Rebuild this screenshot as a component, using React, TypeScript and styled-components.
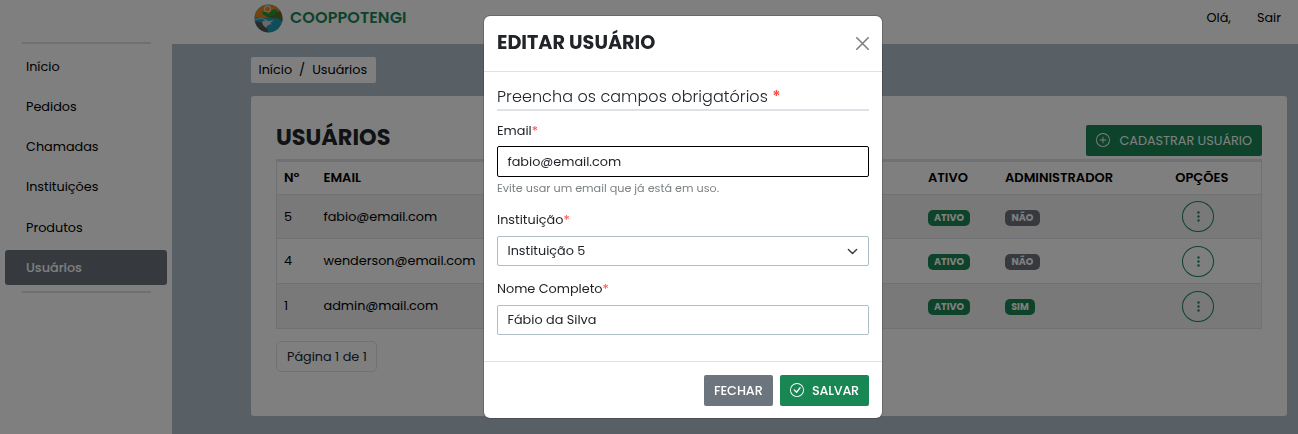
import React from "react";
import styled, { createGlobalStyle, css } from "styled-components";
import { BsPlusCircle, BsCheckCircle, BsThreeDotsVertical } from "react-icons/bs";

const GlobalStyle = createGlobalStyle`
  *, *::before, *::after { box-sizing: border-box; }
  body {
    margin: 0;
    overflow: hidden;
    font-family: Poppins, Inter, "Open Sans", sans-serif;
    font-size: 12.8px;
    line-height: 20px;
    color: #212529;
    background: #b1bfcb;
  }
  button, input { font: inherit; letter-spacing: inherit; }
`;

/* Text run with its own tracking */
const T = styled.span<{ $ls?: number }>`
  letter-spacing: ${(p) => p.$ls ?? 0}px;
  white-space: nowrap;
`;

const Page = styled.div`
  display: grid;
  grid-template-columns: 172px 1fr;
  height: 434px;
`;
const Sidebar = styled.aside`
  background: #fff;
  padding: 42px 5px 0;
`;
const Rule = styled.hr`
  border: 0;
  height: 2px;
  margin: 0 16px 0 17px;
  background: #dee0e2;
`;
const Nav = styled.nav`
  display: flex;
  flex-direction: column;
  gap: 5.3px;
  padding: 5px 0 6px;
`;
const NavItem = styled.a<{ $active?: boolean }>`
  display: flex;
  align-items: center;
  height: 35px;
  padding-left: 21px;
  border-radius: 3px;
  color: #000;
  ${(p) => p.$active && css`background: #6c757d; color: #fff; font-weight: 500;`}
`;
const Main = styled.div`
  display: flex;
  flex-direction: column;
`;
const Header = styled.header`
  display: flex;
  align-items: center;
  height: 44px;
  padding: 0 17px 8px 82px;
  background: #fff;
  color: #000;
`;
const Brand = styled.div`
  flex: 1;
  display: flex;
  align-items: center;
  gap: 7px;
  font-size: 16px;
  font-weight: 600;
  color: #198754;
`;
const UserLinks = styled.div`
  display: flex;
  gap: 26px;
`;
const Content = styled.div`
  padding: 13px 11px 0 79px;
`;
const Crumbs = styled.div`
  display: inline-flex;
  align-items: center;
  gap: 7px;
  width: 125px;
  height: 26px;
  padding: 0 7.5px 1px;
  border-radius: 2px;
  background: #fff;
  color: #000;
  vertical-align: top;
`;
const Card = styled.section`
  height: 320px;
  margin-top: 13px;
  padding: 29px 25px 0;
  border-radius: 3px;
  background: #fff;
`;
const CardHead = styled.div`
  display: flex;
  justify-content: space-between;
  height: 34px;
`;
const CardTitle = styled.h1`
  margin: 0;
  padding-top: 1px;
  font-size: 22.4px;
  line-height: 22px;
  font-weight: 700;
`;
const Button = styled.button<{ $tone?: "gray"; $w: number; $weight?: number }>`
  display: flex;
  align-items: center;
  justify-content: space-between;
  width: ${(p) => p.$w}px;
  height: 31px;
  padding: 0 10px;
  border: 0;
  border-radius: 2px;
  color: #fff;
  font-weight: ${(p) => p.$weight ?? 500};
  background: ${(p) => (p.$tone === "gray" ? "#6c757d" : "#198754")};
  svg { margin-top: -2px; }
`;
const Table = styled.div`
  border: 1px solid #dee2e6;
  border-top: 3px solid #dee2e6;
  border-bottom: 0;
`;
const Row = styled.div<{ $head?: boolean; $striped?: boolean; $h: number }>`
  display: grid;
  grid-template-columns: 39.5px 604.5px 77px 141.5px 1fr;
  align-items: center;
  height: ${(p) => p.$h}px;
  padding-left: 7px;
  border-bottom: 1px solid #dee2e6;
  color: #000;
  font-size: ${(p) => (p.$head ? 13 : 12.8)}px;
  font-weight: ${(p) => (p.$head ? 600 : 400)};
  background: ${(p) => (p.$striped ? "#f2f2f2" : "#fff")};
`;
const Center = styled.div`
  display: flex;
  justify-content: center;
  padding-right: 4px;
`;
const Badge = styled.span<{ $off?: boolean; $w: number }>`
  display: flex;
  align-items: center;
  justify-content: center;
  width: ${(p) => p.$w}px;
  height: 16px;
  margin-top: 2px;
  border-radius: 5px;
  color: #fff;
  font-size: 9.6px;
  font-weight: 700;
  background: ${(p) => (p.$off ? "#6c757d" : "#198754")};
`;
const RoundButton = styled.button`
  display: flex;
  align-items: center;
  justify-content: center;
  width: 32px;
  height: 31px;
  margin-right: 7px;
  padding: 0;
  border: 1px solid #198754;
  border-radius: 50%;
  background: transparent;
  color: #198754;
`;
const PageInfo = styled.div`
  display: inline-flex;
  align-items: center;
  width: 101px;
  height: 31px;
  margin-top: 12px;
  padding-left: 10px;
  border: 1px solid #dee2e6;
  border-radius: 5px;
`;

const Backdrop = styled.div`
  position: fixed;
  inset: 0;
  display: flex;
  justify-content: center;
  align-items: flex-start;
  padding: 15px 0 0 68px;
  background: rgba(0, 0, 0, 0.5);
`;
const Dialog = styled.div`
  width: 400px;
  height: 404px;
  border: 1px solid rgba(0, 0, 0, 0.175);
  border-radius: 7px;
  background: #fff;
  background-clip: padding-box;
`;
const DialogHead = styled.div`
  display: flex;
  align-items: center;
  justify-content: space-between;
  height: 56px;
  padding: 0 13px;
  border-bottom: 1px solid #dee2e6;
`;
const DialogTitle = styled.h2`
  margin: -2px 0 0;
  font-size: 19.2px;
  font-weight: 700;
`;
const DialogBody = styled.div`
  height: 289px;
  padding: 13px 13px 0;
`;
const Lead = styled.p`
  height: 26px;
  margin: 0 0 10px;
  padding-top: 2px;
  border-bottom: 2px solid #dee2e6;
  font-size: 16px;
  font-weight: 300;
`;
const Star = styled.span`
  color: #ff4b4b;
`;
const LeadStar = styled(Star)`
  font-weight: 600;
`;
const Label = styled.label<{ $top?: number }>`
  display: block;
  height: 20px;
  margin: ${(p) => p.$top ?? 0}px 0 6px;
`;
const Field = styled.div<{ $focus?: boolean }>`
  display: flex;
  align-items: center;
  justify-content: space-between;
  height: ${(p) => (p.$focus ? 31 : 30)}px;
  margin-top: ${(p) => (p.$focus ? -1 : 0)}px;
  padding: 0 10px 0 9.5px;
  border: 1px solid ${(p) => (p.$focus ? "#000" : "#aebfca")};
  border-radius: 2px;
`;
const Help = styled.div`
  height: 14px;
  margin-top: 4px;
  font-size: 11.2px;
  line-height: 14px;
  color: #7b8084;
`;
const DialogFoot = styled.div`
  display: flex;
  justify-content: flex-end;
  gap: 7px;
  padding: 13px;
  border-top: 1px solid #dee2e6;
`;

const Logo = () => (
  <svg width="29" height="29" viewBox="0 0 29 29">
    <circle cx="14.5" cy="14.5" r="14" fill="#1f9ab5" />
    <path d="M.6 13A14 14 0 0 1 27 8.500Q20 11 15 13T.6 13Z" fill="#e48a1c" />
    <path d="M26 7Q29 12 28.400 18Q24 13 18 14L11 12Q18 8 26 7Z" fill="#5f6a1d" />
    <path d="M1.200 18Q5 17 10 20L13 23L14 28.500Q4 27.500 1.200 18Z" fill="#555" />
    <path d="M8 18Q11 15 15 17L20 16L16 19L18 20L14 21L12 24L9 21Z" fill="#d0d4d4" />
    <path d="M1 15.500Q7 13 13 16" fill="none" stroke="#d0d4d4" strokeWidth=".8" />
    <circle cx="13.500" cy="5" r="3" fill="none" stroke="#e6c79d" strokeWidth="1.400" />
    <path d="M16 12Q15 5 23 5Q23 11 16 12ZM16 12Q9 13 8 8Q14 7 16 12Z" fill="#1d9a3c" />
    <path d="M16 8V14" stroke="#1d9a3c" />
  </svg>
);

const navItems = ["Início", "Pedidos", "Chamadas", "Instituições", "Produtos", "Usuários"];
const users = [
  { id: "5", email: "fabio@email.com", admin: false, h: 44 },
  { id: "4", email: "wenderson@email.com", admin: false, h: 45 },
  { id: "1", email: "admin@mail.com", admin: true, h: 45 },
];

export default function App() {
  return (
    <>
      <GlobalStyle />
      <Page>
        <Sidebar>
          <Rule />
          <Nav>
            {navItems.map((name) => (
              <NavItem key={name} $active={name === "Usuários"}><T>{name}</T></NavItem>
            ))}
          </Nav>
          <Rule />
        </Sidebar>
        <Main>
          <Header>
            <Brand><Logo /><T $ls={0.08}>COOPPOTENGI</T></Brand>
            <UserLinks><T>Olá,</T><T>Sair</T></UserLinks>
          </Header>
          <Content>
            <Crumbs><T>Início</T><T>/</T><T>Usuários</T></Crumbs>
            <Card>
              <CardHead>
                <CardTitle><T>USUÁRIOS</T></CardTitle>
                <Button $w={176} $weight={400}><BsPlusCircle size={14} /><T>CADASTRAR USUÁRIO</T></Button>
              </CardHead>
              <Table>
                <Row $head $h={33}>
                  <T>Nº</T><T>EMAIL</T><T>ATIVO</T><T>ADMINISTRADOR</T><Center><T>OPÇÕES</T></Center>
                </Row>
                {users.map((u, i) => (
                  <Row key={u.id} $h={u.h} $striped={i % 2 === 0}>
                    <T>{u.id}</T>
                    <T>{u.email}</T>
                    <Badge $w={42}>ATIVO</Badge>
                    <Badge $w={u.admin ? 30 : 35} $off={!u.admin}>{u.admin ? "SIM" : "NÃO"}</Badge>
                    <Center><RoundButton><BsThreeDotsVertical size={13} /></RoundButton></Center>
                  </Row>
                ))}
              </Table>
              <PageInfo><T>Página 1 de 1</T></PageInfo>
            </Card>
          </Content>
        </Main>
      </Page>
      <Backdrop>
        <Dialog role="dialog">
          <DialogHead>
            <DialogTitle><T>EDITAR USUÁRIO</T></DialogTitle>
            <svg width="13" height="13" viewBox="0 0 13 13" fill="none" stroke="#7f7f7f" strokeWidth="1.600" strokeLinecap="round">
              <path d="M.8.8 12.200 12.200M12.200.8.8 12.200" />
            </svg>
          </DialogHead>
          <DialogBody>
            <Lead><T $ls={0.05}>Preencha os campos obrigatórios <LeadStar>*</LeadStar></T></Lead>
            <Label><T>Email<Star>*</Star></T></Label>
            <Field $focus><T>fabio@email.com</T></Field>
            <Help><T>Evite usar um email que já está em uso.</T></Help>
            <Label $top={15}><T>Instituição<Star>*</Star></T></Label>
            <Field>
              <T>Instituição 5</T>
              <svg width="11" height="11" viewBox="0 0 16 16" fill="none" stroke="#343a40" strokeWidth="2" strokeLinecap="round" strokeLinejoin="round">
                <path d="m2 5 6 6 6-6" />
              </svg>
            </Field>
            <Label $top={13}><T>Nome Completo<Star>*</Star></T></Label>
            <Field><T>Fábio da Silva</T></Field>
          </DialogBody>
          <DialogFoot>
            <Button $tone="gray" $w={69}><T $ls={-0.1}>FECHAR</T></Button>
            <Button $w={89}><BsCheckCircle size={14} /><T $ls={-0.2}>SALVAR</T></Button>
          </DialogFoot>
        </Dialog>
      </Backdrop>
    </>
  );
}
